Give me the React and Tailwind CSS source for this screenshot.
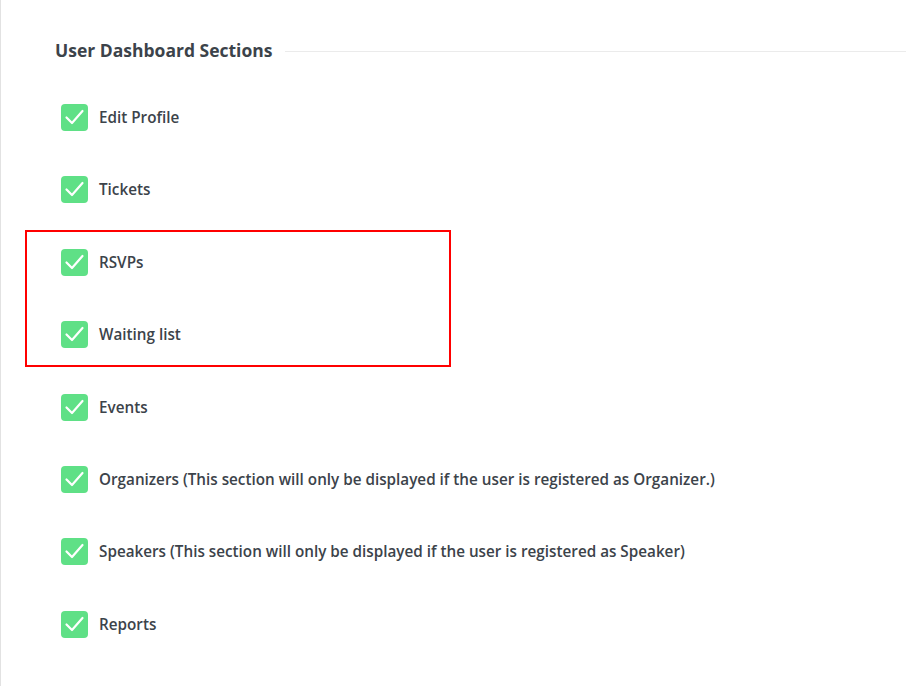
import React from 'react';

const sections = [
    { label: 'Edit Profile' },
    { label: 'Tickets' },
    { label: 'RSVPs', marked: true },
    { label: 'Waiting list', marked: true },
    { label: 'Events' },
    { label: 'Organizers (This section will only be displayed if the user is registered as Organizer.)' },
    { label: 'Speakers (This section will only be displayed if the user is registered as Speaker)' },
    { label: 'Reports' },
];

const CheckBox = () => (
    <div className="w-[27px] h-[27px] rounded-[4px] bg-[#5fe086] flex items-center justify-center shrink-0">
        <svg width="21" height="21" viewBox="0 0 21 21" fill="none">
            <path d="M2.5 10.5 L8 16 L18.5 4" stroke="white" strokeWidth="2.2" strokeLinecap="round" strokeLinejoin="round" />
        </svg>
    </div>
);

const SectionRow = ({ label }) => (
    <div className="flex items-center h-[27px] gap-[11px]">
        <CheckBox />
        <span className="text-[15.25px] font-semibold text-[#3c434a] whitespace-nowrap">{label}</span>
    </div>
);

export default function App() {
    const before = sections.slice(0, 2);
    const marked = sections.filter((s) => s.marked);
    const after = sections.slice(4);

    return (
        <div className="min-h-[686px] w-[906px] bg-white border-l border-[#e2e2e2] font-['Open_Sans','Noto_Sans',sans-serif] overflow-hidden">
            <div className="pl-[54px] pt-[37px]">
                <div className="flex items-center gap-[13px]">
                    <h2 className="text-[17.5px] leading-[26px] font-bold text-[#3c434a] whitespace-nowrap">User Dashboard Sections</h2>
                    <div className="flex-1 h-px bg-[#ebebeb] mt-[2px]" />
                </div>

                <div className="mt-[41px] pl-[6px] flex flex-col gap-[45.4px]">
                    {before.map((s) => (
                        <SectionRow key={s.label} label={s.label} />
                    ))}
                    <div className="-my-[19px] -ml-[36px] pl-[34px] py-[17px] w-[426px] border-2 border-[#ff0000] flex flex-col gap-[45.4px]">
                        {marked.map((s) => (
                            <SectionRow key={s.label} label={s.label} />
                        ))}
                    </div>
                    {after.map((s) => (
                        <SectionRow key={s.label} label={s.label} />
                    ))}
                </div>
            </div>
        </div>
    );
}
